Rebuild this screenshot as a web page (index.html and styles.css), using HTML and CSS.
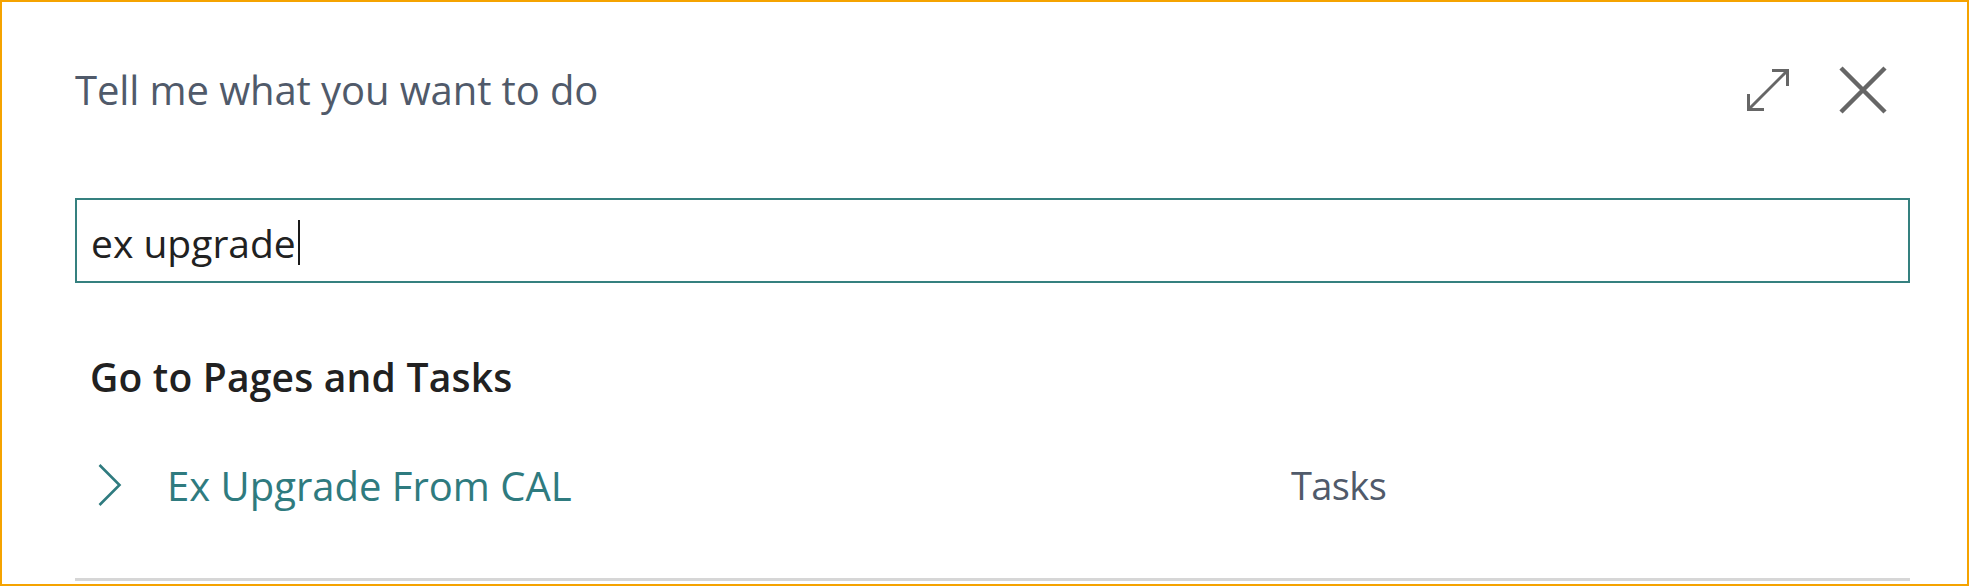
FILE: index.html
```html
<!DOCTYPE html>
<html lang="en">
<head>
<meta charset="utf-8">
<title>Tell me what you want to do</title>
<link rel="stylesheet" href="styles.css">
</head>
<body>
<div class="dialog">
  <header class="head">
    <h1 class="title">Tell me what you want to do</h1>
    <div class="tools">
      <button class="icon-btn expand" aria-label="Expand">
        <svg width="44" height="44" viewBox="0 0 44 44" fill="none" stroke="#666" stroke-width="3">
          <path d="M3 41 L41 3"/>
          <path d="M26 2.5 H41.5 V18"/>
          <path d="M2.5 26 V41.5 H18"/>
        </svg>
      </button>
      <button class="icon-btn close" aria-label="Close">
        <svg width="48" height="48" viewBox="0 0 48 48" fill="none" stroke="#666" stroke-width="4.5">
          <path d="M2 2 L46 46 M46 2 L2 46"/>
        </svg>
      </button>
    </div>
  </header>
  <div class="search">
    <span class="search-text">ex upgrade</span><span class="caret"></span>
  </div>
  <h2 class="section">Go to Pages and Tasks</h2>
  <div class="result">
    <span class="chev">
      <svg width="24" height="42" viewBox="0 0 24 42" fill="none" stroke="#2f7b7f" stroke-width="2.6">
        <path d="M1.5 1 L21.5 21 L1.5 41"/>
      </svg>
    </span>
    <span class="result-name">Ex Upgrade From CAL</span>
    <span class="result-cat">Tasks</span>
  </div>
  <div class="rule"></div>
</div>
</body>
</html>
```

FILE: styles.css
```css
html, body {
  margin: 0;
  padding: 0;
  background: #ffffff;
}

.dialog {
  box-sizing: border-box;
  width: 1969px;
  height: 586px;
  border: 2px solid #f5a300;
  padding: 64px 57px 0 73px;
  font-family: "Open Sans", "Noto Sans", sans-serif;
  display: flex;
  flex-direction: column;
}

.head {
  display: flex;
  align-items: center;
  justify-content: space-between;
  height: 48px;
}

.title {
  margin: 0;
  font-size: 40px;
  font-weight: 400;
  color: #505a6a;
  line-height: 48px;
  letter-spacing: -0.1px;
}

.tools {
  display: flex;
  align-items: center;
  gap: 49px;
  margin-right: 23px;
}

.icon-btn {
  border: 0;
  padding: 0;
  margin: 0;
  background: none;
  display: flex;
}

.search {
  margin-top: 84px;
  height: 85px;
  box-sizing: border-box;
  border: 2px solid #35807f;
  display: flex;
  align-items: center;
  padding: 4px 0 0 14px;
}

.search-text {
  font-size: 39px;
  color: #212121;
}

.caret {
  width: 2px;
  height: 45px;
  background: #1a1a1a;
  margin-left: 2px;
}

.section {
  margin: 70px 0 0 15px;
  font-size: 39px;
  font-weight: 600;
  color: #212121;
  line-height: 48px;
  letter-spacing: 0.2px;
}

.result {
  display: flex;
  align-items: center;
  margin-top: 60px;
  height: 48px;
}

.chev {
  display: flex;
  margin-left: 23px;
  width: 69px;
}

.result-name {
  font-size: 40px;
  color: #2f7b7f;
  width: 1124px;
}

.result-cat {
  font-size: 38px;
  font-weight: 400;
  color: #505a6a;
  letter-spacing: -0.6px;
}

.rule {
  margin-top: auto;
  margin-bottom: 3px;
  height: 3px;
  background: #d6d6d6;
}
```
